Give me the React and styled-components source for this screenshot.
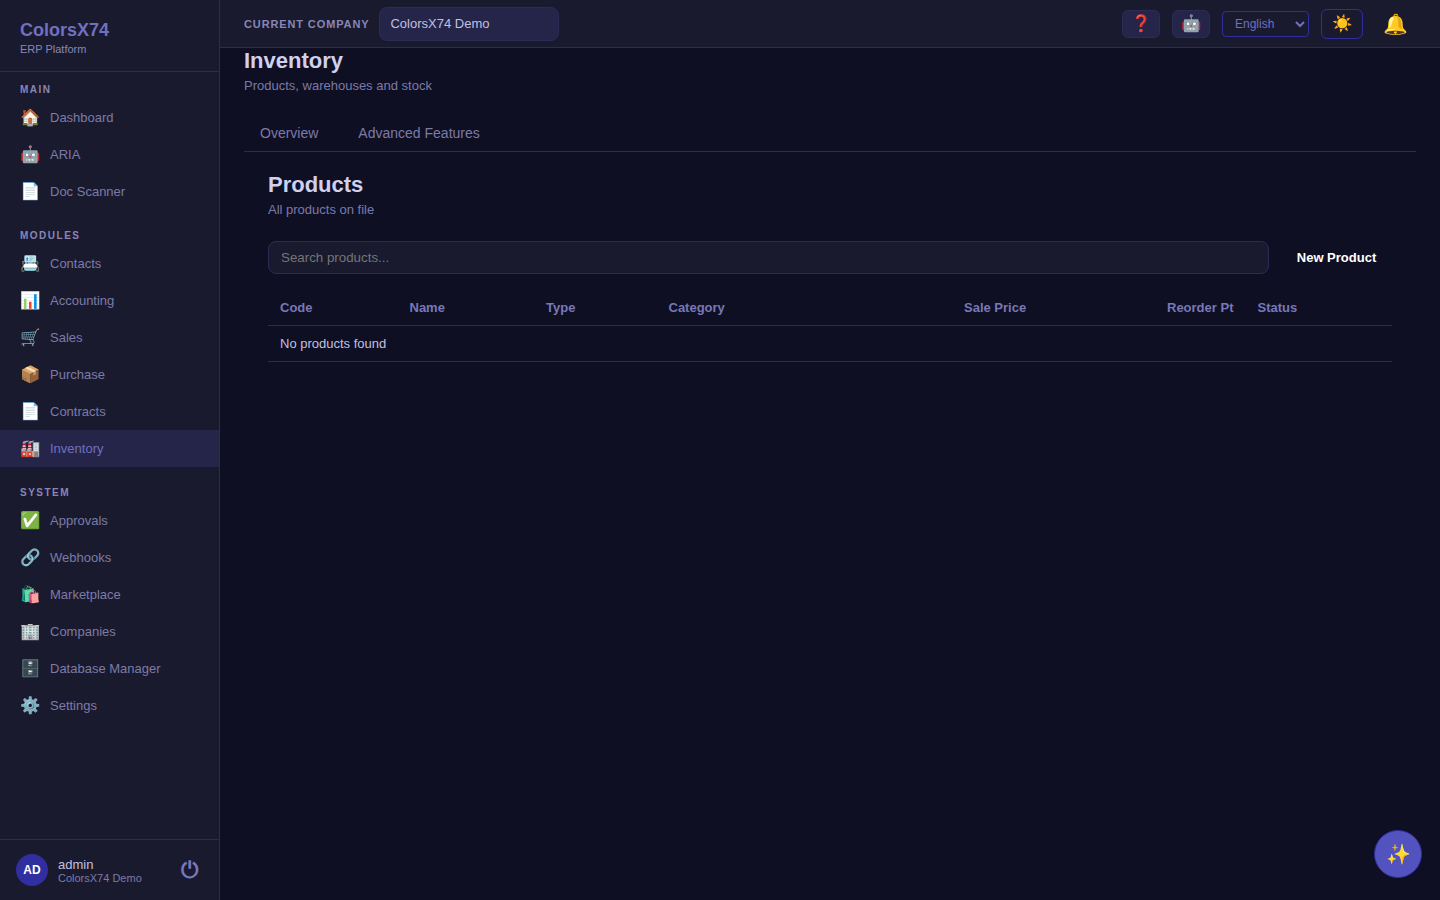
import styled, { createGlobalStyle } from 'styled-components'

const GlobalStyle = createGlobalStyle`
  html, body {
    margin: 0;
    height: 100%;
    background: #0f0f23;
    font-family: "Liberation Sans", Arial, sans-serif;
    overflow: hidden;
  }
  * { box-sizing: border-box; }
`

const NAV = [
  {
    title: 'Main',
    items: [
      ['🏠', 'Dashboard'],
      ['🤖', 'ARIA'],
      ['📄', 'Doc Scanner'],
    ],
  },
  {
    title: 'Modules',
    items: [
      ['📇', 'Contacts'],
      ['📊', 'Accounting'],
      ['🛒', 'Sales'],
      ['📦', 'Purchase'],
      ['📄', 'Contracts'],
      ['🏭', 'Inventory'],
    ],
  },
  {
    title: 'System',
    items: [
      ['✅', 'Approvals'],
      ['🔗', 'Webhooks'],
      ['🛍️', 'Marketplace'],
      ['🏢', 'Companies'],
      ['🗄️', 'Database Manager'],
      ['⚙️', 'Settings'],
    ],
  },
]

const COLUMNS = [
  ['Code', 129.5],
  ['Name', 136.5],
  ['Type', 122.5],
  ['Category', 295.5],
  ['Sale Price', 203],
  ['Reorder Pt', 90.5],
  ['Status', 146.5],
]

export default function App() {
  return (
    <Shell>
      <GlobalStyle />
      <Sidebar>
        <Brand>
          <BrandName>ColorsX74</BrandName>
          <BrandSub>ERP Platform</BrandSub>
        </Brand>
        <Nav>
          {NAV.map((section) => (
            <Section key={section.title}>
              <SectionTitle>{section.title}</SectionTitle>
              {section.items.map(([icon, label]) => (
                <NavItem key={label} $active={label === 'Inventory'}>
                  <NavIcon>{icon}</NavIcon>
                  {label}
                </NavItem>
              ))}
            </Section>
          ))}
        </Nav>
        <UserBar>
          <Avatar>AD</Avatar>
          <UserInfo>
            <UserName>admin</UserName>
            <UserCompany>ColorsX74 Demo</UserCompany>
          </UserInfo>
          <LogoutButton>⏻</LogoutButton>
        </UserBar>
      </Sidebar>

      <Main>
        <Topbar>
          <CompanyLabel>Current Company</CompanyLabel>
          <CompanySelect>ColorsX74 Demo</CompanySelect>
          <TopActions>
            <IconButton>❓</IconButton>
            <IconButton>🤖</IconButton>
            <LangSelect defaultValue="en">
              <option value="en">English</option>
            </LangSelect>
            <ThemeButton>☀️</ThemeButton>
            <BellButton>🔔</BellButton>
          </TopActions>
        </Topbar>

        <Content>
          <PageTitle>Inventory</PageTitle>
          <PageSub>Products, warehouses and stock</PageSub>
          <Tabs>
            <Tab>Overview</Tab>
            <Tab>Advanced Features</Tab>
          </Tabs>
          <Panel>
            <PanelTitle>Products</PanelTitle>
            <PanelSub>All products on file</PanelSub>
            <Toolbar>
              <SearchInput placeholder="Search products..." />
              <NewButton>New Product</NewButton>
            </Toolbar>
            <Table>
              <thead>
                <tr>
                  {COLUMNS.map(([name, width]) => (
                    <Th key={name} $width={width}>{name}</Th>
                  ))}
                </tr>
              </thead>
              <tbody>
                <tr>
                  <Td colSpan={7}>No products found</Td>
                </tr>
              </tbody>
            </Table>
          </Panel>
        </Content>
      </Main>

      <Fab>✨</Fab>
    </Shell>
  )
}

const Shell = styled.div`
  display: flex;
  height: 900px;
  background: #0f0f23;
`

const Sidebar = styled.aside`
  width: 220px;
  flex-shrink: 0;
  display: flex;
  flex-direction: column;
  background: #1a1a2e;
  border-right: 1px solid #2d2b55;
`

const Brand = styled.div`
  height: 72px;
  padding: 20px 20px 0;
  border-bottom: 1px solid #2d2b55;
`

const BrandName = styled.div`
  font-size: 18px;
  line-height: 21px;
  font-weight: 700;
  color: #7070c0;
`

const BrandSub = styled.div`
  margin-top: 1px;
  font-size: 11px;
  line-height: 14px;
  color: #8886b8;
`

const Nav = styled.nav`
  flex: 1;
  padding-top: 12px;
`

const Section = styled.div`
  margin-bottom: 20px;
`

const SectionTitle = styled.div`
  padding: 0 20px;
  margin-bottom: 4px;
  font-size: 10px;
  line-height: 11px;
  font-weight: 700;
  letter-spacing: 1.5px;
  text-transform: uppercase;
  color: #8886b8;
`

const NavItem = styled.a`
  display: flex;
  align-items: center;
  gap: 10px;
  height: 37px;
  padding: 0 20px;
  font-size: 13px;
  color: ${(p) => (p.$active ? '#7070c0' : '#7c7aa8')};
  background: ${(p) => (p.$active ? '#25254a' : 'transparent')};
`

const NavIcon = styled.span`
  width: 20px;
  font-size: 16.5px;
  text-align: center;
`

const UserBar = styled.div`
  height: 61px;
  display: flex;
  align-items: center;
  gap: 10px;
  padding: 0 16px;
  border-top: 1px solid #2d2b55;
`

const Avatar = styled.div`
  width: 32px;
  height: 32px;
  border-radius: 50%;
  display: flex;
  align-items: center;
  justify-content: center;
  background: #312e9f;
  color: #fff;
  font-size: 12px;
  font-weight: 700;
`

const UserInfo = styled.div`
  flex: 1;
  padding-top: 2px;
`

const UserName = styled.div`
  font-size: 13px;
  line-height: 14px;
  color: #c0c0e0;
`

const UserCompany = styled.div`
  font-size: 11px;
  line-height: 13px;
  color: #7c7aa8;
`

const LogoutButton = styled.button`
  padding: 0 5px 0 3px;
  border: 0;
  background: none;
  font-family: inherit;
  font-size: 22px;
  font-weight: 700;
  color: #7878c0;
`

const Main = styled.main`
  flex: 1;
  min-width: 0;
  display: flex;
  flex-direction: column;
`

const Topbar = styled.header`
  height: 48px;
  flex-shrink: 0;
  display: flex;
  align-items: center;
  padding: 0 24px;
  background: #1a1a2e;
  border-bottom: 1px solid #2d2b55;
`

const CompanyLabel = styled.span`
  margin-right: 10px;
  font-size: 11px;
  font-weight: 700;
  letter-spacing: 0.88px;
  text-transform: uppercase;
  color: #8886b8;
`

const CompanySelect = styled.div`
  width: 180px;
  height: 34px;
  display: flex;
  align-items: center;
  padding: 0 10px;
  background: #25254a;
  border: 1px solid #2d2b55;
  border-radius: 8px;
  font-size: 13px;
  color: #c0c0e0;
`

const TopActions = styled.div`
  margin-left: auto;
  display: flex;
  align-items: center;
  gap: 12px;
`

const IconButton = styled.button`
  width: 38px;
  height: 28px;
  padding: 0;
  background: #25254a;
  border: 1px solid #2d2b55;
  border-radius: 6px;
  font-size: 16.5px;
`

const LangSelect = styled.select`
  width: 87px;
  height: 26px;
  padding: 0 8px;
  background: #1a1a2e;
  border: 1px solid #312e9f;
  border-radius: 4px;
  font-family: inherit;
  font-size: 12px;
  color: #7070c0;
`

const ThemeButton = styled.button`
  width: 42px;
  height: 30px;
  padding: 0;
  background: transparent;
  border: 1px solid #312e9f;
  border-radius: 6px;
  font-size: 16.5px;
`

const BellButton = styled.button`
  width: 41px;
  height: 30px;
  padding: 0;
  background: none;
  border: 0;
  font-size: 20px;
`

const Content = styled.div`
  flex: 1;
  padding: 0 24px;
`

const PageTitle = styled.h1`
  margin: 0;
  font-size: 22px;
  line-height: 26px;
  font-weight: 700;
  color: #d0d0f0;
`

const PageSub = styled.p`
  margin: 3px 0 0;
  font-size: 13px;
  line-height: 18px;
  color: #7c7aa8;
`

const Tabs = styled.div`
  display: flex;
  margin-top: 19px;
  border-bottom: 1px solid #2d2b55;
`

const Tab = styled.button`
  height: 37px;
  padding: 0 16px;
  margin-right: 8px;
  background: none;
  border: 0;
  font-family: inherit;
  font-size: 14px;
  color: #7c7aa8;
`

const Panel = styled.section`
  padding: 20px 24px;
`

const PanelTitle = styled.h2`
  margin: 0;
  font-size: 22px;
  line-height: 26px;
  font-weight: 700;
  color: #d0d0f0;
`

const PanelSub = styled.p`
  margin: 3px 0 0;
  font-size: 13px;
  line-height: 18px;
  color: #7c7aa8;
`

const Toolbar = styled.div`
  display: flex;
  align-items: center;
  gap: 12px;
  margin-top: 22px;
  margin-bottom: 16px;
`

const SearchInput = styled.input`
  flex: 1;
  height: 33px;
  padding: 0 12px;
  background: #1a1a2e;
  border: 1px solid #2d2b55;
  border-radius: 8px;
  outline: 0;
  font-family: inherit;
  font-size: 13.33px;
  color: #c0c0e0;
  &::placeholder {
    color: #757575;
  }
`

const NewButton = styled.button`
  width: 111px;
  height: 33px;
  padding: 0;
  background: none;
  border: 0;
  font-family: inherit;
  font-size: 13px;
  font-weight: 700;
  color: #fff;
`

const Table = styled.table`
  width: 100%;
  table-layout: fixed;
  border-collapse: collapse;
`

const Th = styled.th`
  width: ${(p) => p.$width}px;
  height: 35px;
  padding: 0 12px;
  text-align: left;
  font-size: 13px;
  font-weight: 700;
  color: #7878b8;
  border-bottom: 1px solid #2d2b55;
`

const Td = styled.td`
  height: 36px;
  padding: 0 12px;
  font-size: 13px;
  color: #c0c0e0;
  border-bottom: 1px solid #2d2b55;
`

const Fab = styled.button`
  position: fixed;
  right: 18px;
  bottom: 22px;
  width: 48px;
  height: 48px;
  padding: 0;
  border-radius: 50%;
  border: 1px solid #312e9f;
  background: #5353c0;
  font-size: 20px;
`
